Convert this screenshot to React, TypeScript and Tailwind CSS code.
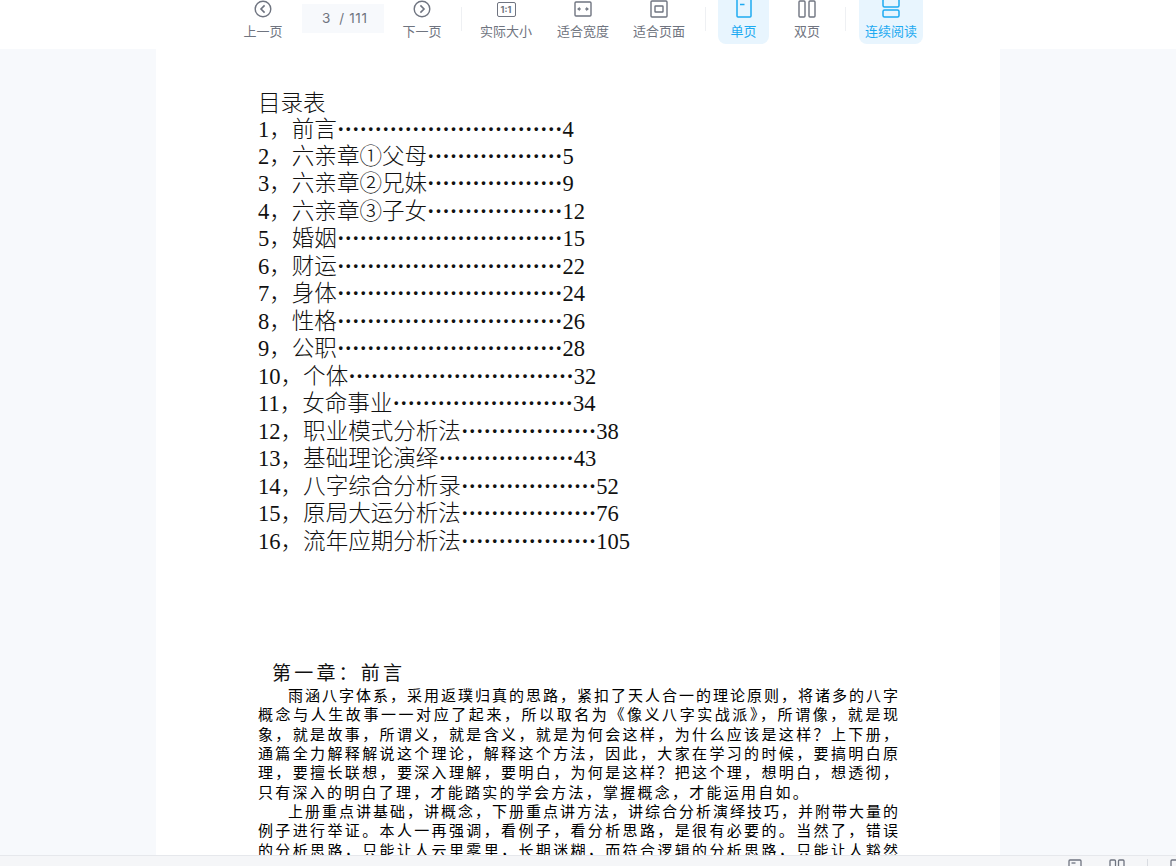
const sans = "font-['Inter','Noto_Sans_CJK_SC',sans-serif]";

function Label({ children, active }: { children: React.ReactNode; active?: boolean }) {
  return (
    <span className={`block whitespace-nowrap text-[13px] leading-[18px] ${active ? "text-[#1eaaf1]" : "text-[#6f7480]"}`}>
      {children}
    </span>
  );
}

function Tool({ label, width, className, active, children }: { label: string; width: string; className?: string; active?: boolean; children: React.ReactNode }) {
  return (
    <div className={`flex h-[44px] flex-col items-center ${width} ${className ?? ""} ${active ? "rounded-b-lg bg-[#e8f5fe]" : ""}`}>
      <div className="flex h-[18px] items-center justify-center">{children}</div>
      <div className="mt-[4px]"><Label active={active}>{label}</Label></div>
    </div>
  );
}

const Divider = ({ className }: { className: string }) => <div className={`mt-[7px] h-[24px] w-px bg-[#eef0f3] ${className}`} />;

const toc: [string, string, number, string][] = [
  ["1", "前言", 10, "4"],
  ["2", "六亲章①父母", 6, "5"],
  ["3", "六亲章②兄妹", 6, "9"],
  ["4", "六亲章③子女", 6, "12"],
  ["5", "婚姻", 10, "15"],
  ["6", "财运", 10, "22"],
  ["7", "身体", 10, "24"],
  ["8", "性格", 10, "26"],
  ["9", "公职", 10, "28"],
  ["10", "个体", 10, "32"],
  ["11", "女命事业", 8, "34"],
  ["12", "职业模式分析法", 6, "38"],
  ["13", "基础理论演绎", 6, "43"],
  ["14", "八字综合分析录", 6, "52"],
  ["15", "原局大运分析法", 6, "76"],
  ["16", "流年应期分析法", 6, "105"],
];

const para: [string, boolean][] = [
  ["雨涵八字体系，采用返璞归真的思路，紧扣了天人合一的理论原则，将诸多的八字", true],
  ["概念与人生故事一一对应了起来，所以取名为《像义八字实战派》，所谓像，就是现", false],
  ["象，就是故事，所谓义，就是含义，就是为何会这样，为什么应该是这样？上下册，", false],
  ["通篇全力解释解说这个理论，解释这个方法，因此，大家在学习的时候，要搞明白原", false],
  ["理，要擅长联想，要深入理解，要明白，为何是这样？把这个理，想明白，想透彻，", false],
];
const para2: [string, boolean][] = [
  ["上册重点讲基础，讲概念，下册重点讲方法，讲综合分析演绎技巧，并附带大量的", true],
  ["例子进行举证。本人一再强调，看例子，看分析思路，是很有必要的。当然了，错误", false],
  ["的分析思路，只能让人云里雾里，长期迷糊，而符合逻辑的分析思路，只能让人豁然", false],
];

function Line({ text, indent }: { text: string; indent: boolean }) {
  return (
    <div className={`h-[19.35px] overflow-hidden whitespace-nowrap text-justify [text-align-last:justify] ${indent ? "ml-[30px]" : ""}`}>
      {text}
    </div>
  );
}

export default function App() {
  return (
    <div className={`flex h-[866px] w-[1176px] flex-col overflow-hidden bg-[#f7f9fc] ${sans}`}>
      <header className="flex h-[49px] shrink-0 items-start bg-white pl-[244px]">
        <Tool label="上一页" width="w-[38px]">
          <svg width="18" height="18" viewBox="0 0 18 18" fill="none" stroke="#6f7480" strokeWidth="1.4">
            <circle cx="9" cy="9" r="7.8" />
            <path d="M10.6 5.4 7 9l3.6 3.6" strokeWidth="1.6" />
          </svg>
        </Tool>
        <div className="ml-[20px] mt-[4px] flex h-[29px] w-[82px] items-center bg-[#f7f9fc] pl-[20px] text-[13.5px] text-[#6f7480]">
          <span>3</span>
          <span className="ml-[9px] tracking-[0.6px]">/ 111</span>
        </div>
        <Tool label="下一页" width="w-[38px]" className="ml-[19px]">
          <svg width="18" height="18" viewBox="0 0 18 18" fill="none" stroke="#6f7480" strokeWidth="1.4">
            <circle cx="9" cy="9" r="7.8" />
            <path d="M7.4 5.4 11 9l-3.6 3.6" strokeWidth="1.6" />
          </svg>
        </Tool>
        <Divider className="ml-[20px]" />
        <Tool label="实际大小" width="w-[52px]" className="ml-[18px]">
          <div className="flex h-[15px] w-[19px] items-center justify-center rounded-[2px] border-[1.5px] border-[#6f7480] text-[9px] font-bold leading-none text-[#6f7480]">1:1</div>
        </Tool>
        <Tool label="适合宽度" width="w-[52px]" className="ml-[25px]">
          <svg width="18" height="16" viewBox="0 0 18 16" fill="none" stroke="#6f7480" strokeWidth="1.4">
            <rect x="1" y="1" width="16" height="14" rx="1" />
            <path d="M4 8h3M11 8h3" strokeWidth="1.2" />
            <path d="M3.5 8l2-1.6v3.2zM14.5 8l-2-1.6v3.2z" fill="#6f7480" strokeWidth="0.6" />
          </svg>
        </Tool>
        <Tool label="适合页面" width="w-[52px]" className="ml-[24px]">
          <svg width="18" height="18" viewBox="0 0 18 18" fill="none" stroke="#6f7480" strokeWidth="1.4">
            <rect x="1" y="1" width="16" height="16" rx="1" />
            <rect x="5" y="6" width="8" height="6" rx="0.5" />
          </svg>
        </Tool>
        <Divider className="ml-[20px]" />
        <Tool label="单页" width="w-[51px]" className="ml-[12px]" active>
          <svg width="16" height="18" viewBox="0 0 16 18" fill="none" stroke="#1eaaf1" strokeWidth="1.5">
            <rect x="1" y="-1" width="14" height="18" rx="1" />
            <path d="M4 4.5h4.5" />
          </svg>
        </Tool>
        <Tool label="双页" width="w-[26px]" className="ml-[25px]">
          <svg width="18" height="18" viewBox="0 0 18 18" fill="none" stroke="#6f7480" strokeWidth="1.4">
            <rect x="1" y="1" width="6" height="16" rx="1" />
            <rect x="11" y="1" width="6" height="16" rx="1" />
          </svg>
        </Tool>
        <Divider className="ml-[25px]" />
        <Tool label="连续阅读" width="w-[64px]" className="ml-[13px]" active>
          <svg width="18" height="18" viewBox="0 0 18 18" fill="none" stroke="#1eaaf1" strokeWidth="1.5">
            <rect x="1" y="-1" width="16" height="8" rx="1.5" />
            <rect x="1" y="10" width="16" height="7" rx="1.5" />
          </svg>
        </Tool>
      </header>

      <main className="flex min-h-0 flex-1">
        <article className="ml-[156px] h-full w-[844px] overflow-hidden bg-white pl-[102px] pr-[102px] pt-[41px] font-['Liberation_Serif','Noto_Sans_CJK_SC',serif] text-[#111]">
          <section className="text-[22.55px] leading-[27.4px]">
            <div className="h-[25.5px] whitespace-nowrap font-light">目录表</div>
            {toc.map(([n, name, dots, page]) => (
              <div key={n} className="h-[27.47px] whitespace-nowrap font-light">
                {n}，{name}
                <span className="font-bold">{"·".repeat(dots * 3)}</span>
                {page}
              </div>
            ))}
          </section>
          <h2 className="ml-[14px] mt-[107px] whitespace-nowrap text-[19px] font-normal leading-[24px] tracking-[3.2px]">第一章：前言</h2>
          <section className="mt-[1px] text-[15px] leading-[19.35px] text-black">
            {para.map(([t, i]) => <Line key={t} text={t} indent={i} />)}
            <div className="h-[19.35px] whitespace-nowrap tracking-[2.25px]">只有深入的明白了理，才能踏实的学会方法，掌握概念，才能运用自如。</div>
            {para2.map(([t, i]) => <Line key={t} text={t} indent={i} />)}
          </section>
        </article>
      </main>

      <footer className="flex h-[11px] shrink-0 items-start overflow-hidden border-t border-[#e6e8ec] bg-[#f5f6f8] pl-[1068px] pt-[3px]">
        <svg width="14" height="14" viewBox="0 0 14 14" fill="none" stroke="#6f7480" strokeWidth="1.3" className="shrink-0">
          <rect x="1" y="1" width="12" height="14" rx="1" />
          <path d="M3.5 4h4" />
        </svg>
        <svg width="16" height="14" viewBox="0 0 16 14" fill="none" stroke="#6f7480" strokeWidth="1.3" className="ml-[27px] shrink-0">
          <rect x="1" y="1" width="5.5" height="14" rx="1" />
          <rect x="9.5" y="1" width="5.5" height="14" rx="1" />
        </svg>
        <div className="ml-[22px] h-[8px] w-px shrink-0 bg-[#d9dce1]" />
        <svg width="14" height="14" viewBox="0 0 14 14" fill="none" stroke="#6f7480" strokeWidth="1.3" className="ml-[22px] shrink-0">
          <rect x="1" y="1" width="12" height="14" rx="1" />
        </svg>
      </footer>
    </div>
  );
}
